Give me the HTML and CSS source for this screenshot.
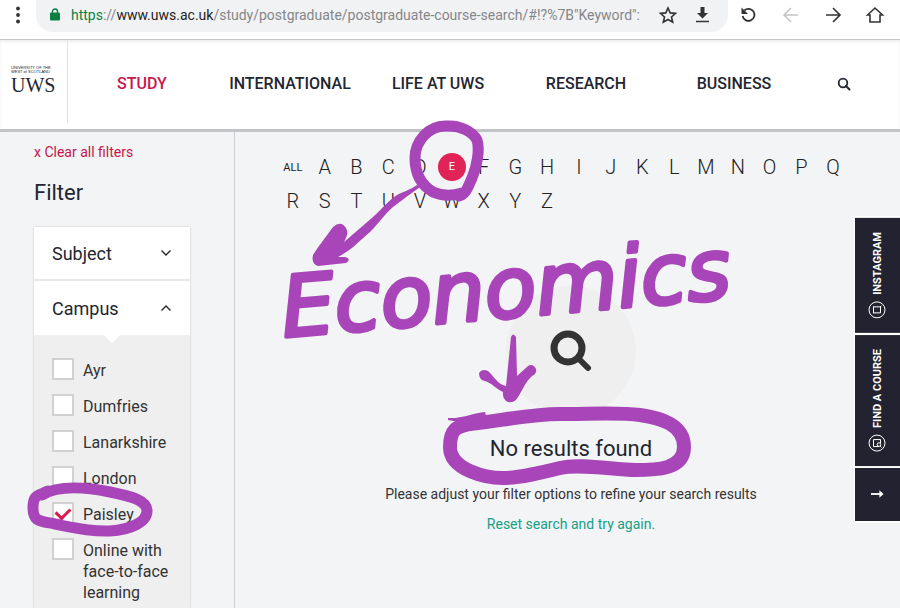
FILE: index.html
```html
<!DOCTYPE html>
<html lang="en">
<head>
<meta charset="utf-8">
<meta name="viewport" content="width=device-width, initial-scale=1">
<title>Postgraduate course search | UWS</title>
<link rel="stylesheet" href="styles.css">
</head>
<body>
<div class="browser-bar">
  <button class="tool menu" aria-label="Menu"><svg viewBox="0 0 24 24"><g fill="#333"><circle cx="12" cy="5.500" r="1.900"/><circle cx="12" cy="12" r="1.900"/><circle cx="12" cy="18.500" r="1.900"/></g></svg></button>
  <div class="address">
    <svg class="lock" viewBox="0 0 10 13"><path d="M2.500 5V3.500a2.500 2.500 0 0 1 5 0V5" fill="none" stroke="#0b8043" stroke-width="1.400"/><rect y="4.500" width="10" height="8" rx="1" fill="#0b8043"/></svg>
    <div class="url"><span class="scheme">https</span>://<span class="host">www.uws.ac.uk</span>/study/postgraduate/postgraduate-course-search/#!?%7B"Keyword":</div>
    <button class="tool" aria-label="Bookmark"><svg viewBox="0 0 24 24"><path d="M11 5l2.200 4.900 5.300.500-4 3.600 1.200 5.200L11 16.500l-4.700 2.700 1.200-5.200-4-3.600 5.300-.500z" fill="none" stroke="#333" stroke-width="1.600"/></svg></button>
    <button class="tool" aria-label="Download"><svg viewBox="0 0 24 24"><path d="M8.500 4h4v6H16l-5.500 5.500L5 10h3.500z" fill="#333"/><path d="M4 18.500h13" stroke="#333" stroke-width="1.500"/></svg></button>
  </div>
  <button class="tool" aria-label="Reload"><svg viewBox="0 0 24 24"><path d="M7.300 7.500A6 6 0 1 1 5.600 13" fill="none" stroke="#333" stroke-width="1.800"/><path d="M4.500 4.500v6.500h6.500z" fill="#333"/></svg></button>
  <button class="tool" aria-label="Back"><svg viewBox="0 0 24 24"><path d="M19 12H5.500M12 5l-7 7 7 7" fill="none" stroke="#c5c5c5" stroke-width="1.500"/></svg></button>
  <button class="tool" aria-label="Forward"><svg viewBox="0 0 24 24"><path d="M5 12h13.500M12 5l7 7-7 7" fill="none" stroke="#333" stroke-width="1.600"/></svg></button>
  <button class="tool" aria-label="Home"><svg viewBox="0 0 24 24"><path d="M4.500 12L12 5l7.500 7H17v7H7v-7z" fill="none" stroke="#333" stroke-width="1.600"/></svg></button>
</div>

<header class="site-header">
  <a class="logo" href="#"><span class="logo-small">UNIVERSITY OF THE<br>WEST of SCOTLAND</span><span class="logo-big">UWS</span></a>
  <nav class="site-nav">
    <a class="current" href="#">STUDY</a>
    <a href="#">INTERNATIONAL</a>
    <a href="#">LIFE AT UWS</a>
    <a href="#">RESEARCH</a>
    <a href="#">BUSINESS</a>
  </nav>
  <button class="search-button" aria-label="Search"><svg viewBox="0 0 14 14"><circle cx="6" cy="6" r="4.300" fill="none" stroke="#232630" stroke-width="1.800"/><path d="M9 9l3.500 3.500" stroke="#232630" stroke-width="2" stroke-linecap="round"/></svg></button>
</header>

<div class="page">
  <aside class="sidebar">
    <a class="clear" href="#">x Clear all filters</a>
    <h2>Filter</h2>
    <div class="filters">
      <button class="group" aria-expanded="false">Subject<svg viewBox="0 0 12 8"><path d="M1.500 1.500L6 6l4.500-4.500" fill="none" stroke="#232630" stroke-width="1.400"/></svg></button>
      <button class="group open" aria-expanded="true">Campus<svg viewBox="0 0 12 8"><path d="M1.500 6.500L6 2l4.500 4.500" fill="none" stroke="#232630" stroke-width="1.400"/></svg></button>
      <div class="options">
        <label><input type="checkbox"><span>Ayr</span></label>
        <label><input type="checkbox"><span>Dumfries</span></label>
        <label><input type="checkbox"><span>Lanarkshire</span></label>
        <label><input type="checkbox"><span>London</span></label>
        <label><input type="checkbox" checked><span>Paisley</span></label>
        <label><input type="checkbox"><span>Online with face-to-face learning</span></label>
      </div>
    </div>
  </aside>
  <main class="results">
    <nav class="letters" aria-label="Courses by letter">
      <a class="all" href="#">ALL</a><a href="#">A</a><a href="#">B</a><a href="#">C</a><a href="#">D</a><a class="selected" href="#">E</a><a href="#">F</a><a href="#">G</a><a href="#">H</a><a href="#">I</a><a href="#">J</a><a href="#">K</a><a href="#">L</a><a href="#">M</a><a href="#">N</a><a href="#">O</a><a href="#">P</a><a href="#">Q</a><a href="#">R</a><a href="#">S</a><a href="#">T</a><a href="#">U</a><a href="#">V</a><a href="#">W</a><a href="#">X</a><a href="#">Y</a><a href="#">Z</a>
    </nav>
    <section class="empty">
      <div class="disc"><svg viewBox="0 0 42 42"><circle cx="18" cy="18" r="14" fill="none" stroke="#333" stroke-width="7"/><path d="M29 29l9 9" stroke="#333" stroke-width="6" stroke-linecap="round"/></svg></div>
      <h1>No results found</h1>
      <p>Please adjust your filter options to refine your search results</p>
      <a href="#">Reset search and try again.</a>
    </section>
  </main>
</div>

<div class="tabs">
  <a class="tab" href="#"><svg viewBox="0 0 18 18"><g fill="none" stroke="#fff"><circle cx="9" cy="9" r="8"/><path d="M5.500 6h7v6h-7zM6 12l-1.500 1M12.500 5.500v7"/></g></svg><span>INSTAGRAM</span></a>
  <a class="tab" href="#"><svg viewBox="0 0 18 18"><g fill="none" stroke="#fff"><circle cx="9" cy="9" r="8"/><path d="M7 5.500h5.500v7h-7V9"/><circle cx="7" cy="7.500" r="1.800"/><path d="M5.800 6L4.300 4.500"/></g></svg><span>FIND A COURSE</span></a>
  <a class="tab arrow" href="#" aria-label="Expand"><svg viewBox="0 0 14 8"><path d="M0 4h11" stroke="#fff" stroke-width="2"/><path d="M9 0l4.500 4L9 8z" fill="#fff"/></svg></a>
</div>

<svg class="ink" viewBox="0 0 900 608">
  <g class="loops">
    <path stroke-width="11" d="M459 196C466 194 468 187 472 178C477 166 480 150 477 140C473 132 460 125 447 126C428 125 415 142 415 158C415 174 421 185 433 192C442 196 452 196 462 193"/>
    <path stroke-width="14" d="M470 424C500 421 530 414 560 414S620 412 640 415S684 424 684 447S655 470 635 470S580 463 560 468S520 478 503 478S450 470 450 447S462 427 472 423"/>
    <path stroke-width="11" d="M42 495C60 484 90 488 110 492S147 500 147 511S130 530 110 531S70 527 55 524S33 522 33 508S38 496 48 491"/>
  </g>
  <path class="fill" d="M417 185C410 190 400 193 397 195C388 201 382 209 373 217L344 242C348 235 348 232 346 228Q341 220 333 227C325 238 318 247 313 255Q311 264 318 266L346 263Q352 259 345 257L338 257C352 250 359 241 370 232C379 223 385 214 393 207Q406 197 420 187Z"/>
  <path class="fill" d="M511 337Q513 332 516 337L517 376L528 366Q533 363 536 369Q537 374 532 376C525 382 522 392 516 400Q511 404 506 401Q502 397 503 392C496 389 492 383 485 381Q479 380 479 373Q482 368 488 371C493 375 497 384 506 386Z"/>
  <path class="fill" d="M448 420v-2C460 419 474 413 485 412L488 424H468Z"/>
  <text x="284" y="337" transform="rotate(-5 284 337)">Economics</text>
</svg>
</body>
</html>
```

FILE: styles.css
```css
* { box-sizing: border-box; }
body {
  margin: 0;
  min-height: 100vh;
  display: flex;
  flex-direction: column;
  position: relative;
  overflow-x: hidden;
  background: #f3f4f6;
  color: #232630;
  font-family: Roboto, "Liberation Sans", sans-serif;
}
a { color: inherit; text-decoration: none; }
button { border: 0; padding: 0; background: none; color: inherit; font: inherit; }
svg { display: block; }

.browser-bar {
  display: flex;
  align-items: center;
  gap: 18px;
  height: 40px;
  padding: 0 13px 10px 6px;
  background: #fff;
  border-bottom: 1px solid #c8c9cb;
}
.tool { flex: none; width: 24px; height: 24px; }
.tool svg { width: 24px; height: 24px; }
.address {
  flex: 1;
  display: flex;
  align-items: center;
  gap: 11px;
  height: 34px;
  margin-left: -12px;
  margin-right: -9px;
  padding: 0 12px 0 14px;
  background: #f1f2f4;
  border-radius: 0 0 17px 17px;
  min-width: 0;
}
.lock { flex: none; width: 10px; height: 13px; }
.url { flex: 1; min-width: 0; overflow: hidden; white-space: nowrap; font-size: 14px; color: #85878a; }
.scheme { color: #0b8043; }
.host { color: #222; }

.site-header {
  display: flex;
  height: 92px;
  padding-right: 20px;
  background: #fff;
  border-bottom: 3px solid #c2c3c6;
  box-shadow: inset 0 2px 3px #eee;
}
.logo {
  flex: none;
  width: 68px;
  height: 83px;
  padding: 26px 0 0 11px;
  border-right: 1px solid #e4e4e6;
  font-family: "Liberation Serif", serif;
}
.logo-small { display: block; font: 4px/4px "Liberation Sans", sans-serif; white-space: nowrap; }
.logo-big { display: block; font-size: 20px; line-height: 22px; }
.site-nav { flex: 1; display: grid; grid-template-columns: repeat(5, 1fr); padding-bottom: 2px; }
.site-nav a { display: flex; align-items: center; justify-content: center; font-size: 16px; font-weight: 500; white-space: nowrap; }
.site-nav .current { color: #c8154b; }
.search-button { width: 72px; display: flex; align-items: center; justify-content: center; padding-bottom: 2px; }
.search-button svg { width: 14px; height: 14px; }

.page { flex: 1; display: flex; }
.sidebar {
  flex: none;
  width: 235px;
  display: flex;
  flex-direction: column;
  padding: 10px 44px 0 34px;
  border-right: 1px solid #cdced2;
}
.clear { font-size: 14px; line-height: 20px; color: #c8154b; }
.sidebar h2 { margin: 16px 0 19px; font-size: 22px; line-height: 30px; font-weight: 400; }
.filters { flex: 1; display: flex; flex-direction: column; background: #efefef; box-shadow: 0 0 2px #c4c4c4; }
.group {
  flex: none;
  display: flex;
  align-items: center;
  justify-content: space-between;
  height: 54px;
  padding: 0 18px;
  background: #fff;
  border-bottom: 2px solid #e8e8e8;
  font-size: 18px;
}
.group svg { width: 12px; height: 8px; }
.group.open { border-bottom: 0; }
.options { position: relative; display: grid; gap: 14px; padding: 23px 16px 0 18px; }
.options::before {
  content: "";
  position: absolute;
  top: 0;
  left: 50%;
  margin-left: -8px;
  border: 8px solid transparent;
  border-top-color: #fff;
  border-bottom: 0;
}
.options label { display: flex; align-items: flex-start; gap: 9px; font-size: 16px; line-height: 21px; color: #333; }
.options span { padding-top: 2px; margin-bottom: -1px; }
.options input {
  appearance: none;
  flex: none;
  width: 22px;
  height: 22px;
  margin: 0;
  background: #fff;
  border: 2px solid #d1d1d1;
  display: grid;
  place-items: center;
}
.options input:checked::before {
  content: "";
  width: 11px;
  height: 7px;
  margin-top: -3px;
  border: solid #d81e50;
  border-width: 0 0 3px 3px;
  transform: rotate(-45deg);
}

.results { flex: 1; min-width: 0; padding: 18px 51px 0 42px; }
.letters { display: grid; grid-template-columns: repeat(18, 1fr); grid-auto-rows: 34px; justify-items: center; align-items: center; }
.letters a { font-size: 20px; font-weight: 300; color: #222; }
.letters .all { font-size: 11px; font-weight: 400; }
.letters .selected {
  width: 28px;
  border-radius: 50%;
  background: #e02458;
  color: #fff;
  font-size: 11px;
  font-weight: 400;
  line-height: 28px;
  text-align: center;
}
.empty { display: flex; flex-direction: column; align-items: center; margin: 68px 0 0 16px; text-align: center; }
.disc { width: 130px; height: 130px; border-radius: 50%; background: #efefef; display: grid; place-items: center; }
.disc svg { width: 42px; height: 42px; }
.empty h1 { margin: 18px 0; font-size: 22px; line-height: 30px; font-weight: 400; }
.empty p { margin: 0 0 10px; padding-top: 2px; font-size: 14px; line-height: 20px; color: #333; }
.empty a { font-size: 14px; line-height: 20px; color: #16a085; }

.tabs { position: absolute; right: 0; top: 216px; display: flex; flex-direction: column; gap: 2px; padding: 2px 0 2px 1px; background: #fff; }
.tab {
  display: flex;
  align-items: center;
  gap: 6px;
  width: 45px;
  padding: 14px 0;
  writing-mode: vertical-rl;
  transform: rotate(180deg);
  background: #232230;
  color: #fff;
  font-size: 11px;
  font-weight: 700;
  white-space: nowrap;
}
.tab svg { width: 18px; height: 18px; }
.tab.arrow { height: 53px; justify-content: center; transform: none; }
.tab.arrow svg { width: 13px; height: 8px; }

.ink { position: absolute; left: 0; top: 0; width: 900px; height: 608px; pointer-events: none; }
.loops { fill: none; stroke: #a845b9; stroke-linecap: round; stroke-linejoin: round; }
.fill { fill: #a845b9; }
.ink text {
  fill: #a845b9;
  stroke: #a845b9;
  stroke-width: 4px;
  stroke-linejoin: round;
  font-family: "DejaVu Sans", sans-serif;
  font-size: 84px;
  font-style: italic;
}
```
